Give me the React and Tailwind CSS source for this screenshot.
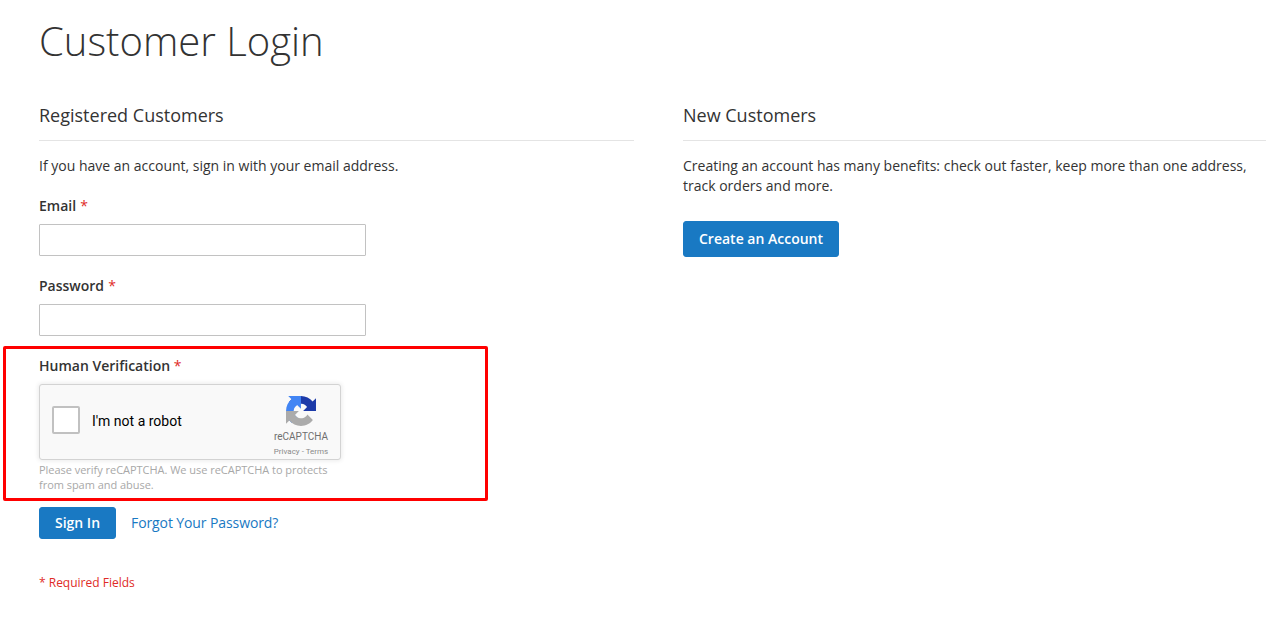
import React from 'react';

const font = { sans: 'font-["Open_Sans",sans-serif]' };

function RecaptchaLogo() {
  return (
    <svg viewBox="0 0 64 64" className="w-[30px] h-[30px] block">
      <path fill="#1c3aa9" d="M64 31.955l-.033-1.37V4.687l-7.16 7.16C50.947 4.674 42.028.093 32.05.093c-10.384 0-19.61 4.958-25.432 12.64l11.736 11.86a15.55 15.55 0 0 1 4.75-5.33c2.05-1.6 4.952-2.908 8.94-2.908.482 0 .855.056 1.13.162 4.94.39 9.222 3.116 11.744 7.07l-8.307 8.307L64 31.953" />
      <path fill="#4285f4" d="M31.952 0l-1.37.033H4.687l7.16 7.16C4.674 13.053.093 21.972.093 31.95c0 10.384 4.958 19.61 12.64 25.432l11.86-11.736a15.55 15.55 0 0 1-5.33-4.75c-1.6-2.05-2.908-4.952-2.908-8.94 0-.482.056-.855.162-1.13.39-4.94 3.116-9.222 7.07-11.744l8.307 8.307L31.953 0" />
      <path fill="#ababab" d="M0 31.952l.033 1.37v25.9l7.16-7.16c5.86 7.173 14.778 11.754 24.757 11.754 10.384 0 19.61-4.958 25.432-12.64l-11.736-11.86a15.55 15.55 0 0 1-4.75 5.33c-2.05 1.6-4.952 2.908-8.94 2.908-.482 0-.855-.056-1.13-.162-4.94-.39-9.222-3.116-11.744-7.07l8.307-8.307L0 31.953" />
    </svg>
  );
}

function Field({ label }) {
  return (
    <div className="h-[80px]">
      <label className="block h-[28px] leading-[20px] font-semibold text-[14px] text-[#333]">
        {label} <span className="text-[#e02b27] font-normal ml-[0.5px]">*</span>
      </label>
      <input type="text" className="block w-[327px] h-[32px] bg-white border border-[#c2c2c2] rounded-[1px] outline-none" />
    </div>
  );
}

export default function App() {
  return (
    <div className={`${font.sans} bg-white text-[#333] text-[14px] leading-[20px] h-[627px] overflow-hidden pl-[39px] pt-[13px]`}>
      <h1 className="text-[40px] font-light leading-[56px] text-[#333]">Customer Login</h1>

      <div className="flex mt-[34px]">
        <div className="w-[595px] shrink-0">
          <h2 className="text-[18px] font-normal leading-[24px] pb-[13px] border-b border-[#e4e4e4]">Registered Customers</h2>
          <p className="mt-[15px]">If you have an account, sign in with your email address.</p>

          <div className="mt-[20px]">
            <Field label="Email" />
            <Field label="Password" />
          </div>

          <div className="w-[485px] h-[155px] -ml-[36px] -mt-[10px] border-[3px] border-[#ff0000] rounded-[2px] pl-[33px]">
            <div className="font-semibold leading-[20px] pt-[7px]">
              Human Verification <span className="text-[#e02b27] font-normal">*</span>
            </div>
            <div className="mt-[8px] w-[302px] h-[76px] bg-[#f9f9f9] border border-[#d3d3d3] rounded-[3px] shadow-[0_0_4px_1px_rgba(0,0,0,0.08)] flex pl-[12px] font-['Roboto',sans-serif]">
              <div className="mt-[21px] w-[28px] h-[28px] bg-white border-2 border-[#c1c1c1] rounded-[2px] shrink-0" />
              <div className="ml-[12px] mt-[26px] text-[14px] text-black flex-1">I'm not a robot</div>
              <div className="flex flex-col items-center w-[56px] mr-[11px] text-[#6f6f6f] pt-[11px]">
                <RecaptchaLogo />
                <div className="text-[10px] leading-[10px] mt-[6px]">reCAPTCHA</div>
                <div className="text-[8px] leading-[10px] mt-[5px] whitespace-nowrap text-[#8a8a8a]">Privacy - Terms</div>
              </div>
            </div>
            <p className="w-[302px] text-[11px] leading-[15px] tracking-[-0.03px] text-[#a8a8a8] mt-[2px]">
              Please verify reCAPTCHA. We use reCAPTCHA to protects from spam and abuse.
            </p>
          </div>

          <div className="flex items-center mt-[6px]">
            <button className="w-[77px] h-[32px] bg-[#1979c3] border border-[#1979c3] rounded-[3px] text-white font-semibold text-[14px] leading-[16px]">Sign In</button>
            <a href="#" className="ml-[15px] text-[#1979c3] tracking-[-0.1px]">Forgot Your Password?</a>
          </div>

          <div className="mt-[34px] text-[12px] leading-[20px] text-[#e02b27]">* Required Fields</div>
        </div>

        <div className="ml-[49px] flex-1">
          <h2 className="text-[18px] font-normal leading-[24px] pb-[13px] border-b border-[#e4e4e4]">New Customers</h2>
          <p className="mt-[15px] w-[575px]">Creating an account has many benefits: check out faster, keep more than one address, track orders and more.</p>
          <button className="mt-[25px] w-[156px] h-[36px] bg-[#1979c3] border border-[#1979c3] rounded-[3px] text-white font-semibold text-[14px]">Create an Account</button>
        </div>
      </div>
    </div>
  );
}
